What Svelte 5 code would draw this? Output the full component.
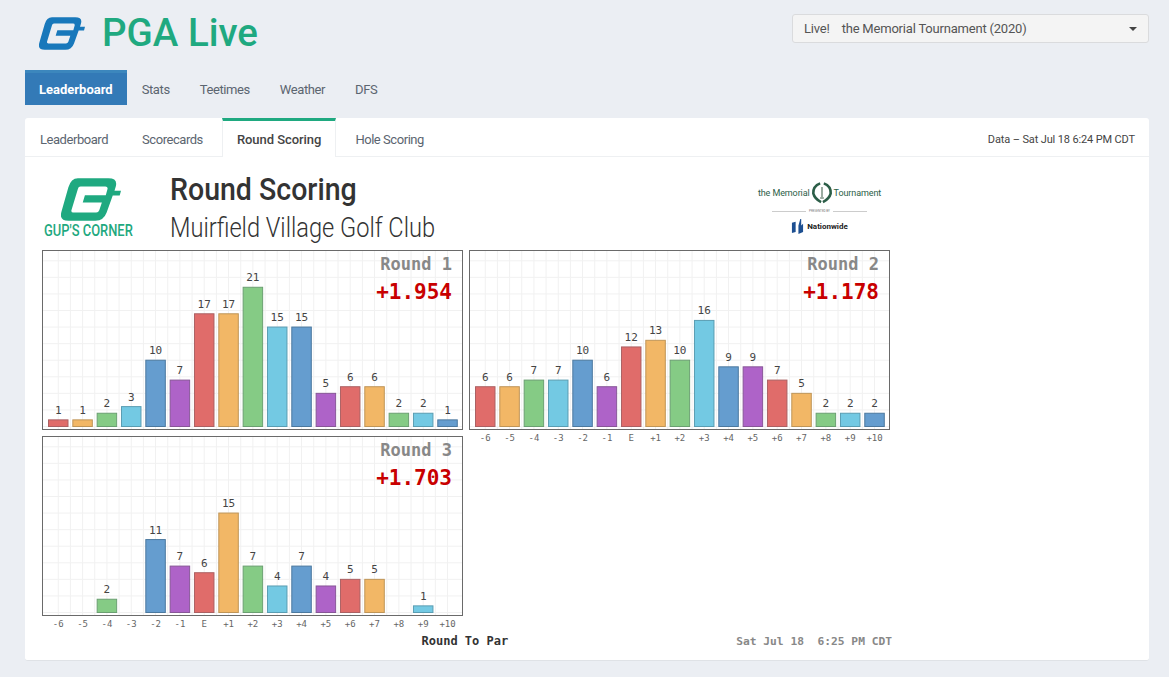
<script lang="ts">
	const navItems = ['Leaderboard', 'Stats', 'Teetimes', 'Weather', 'DFS'];
	const tabs = ['Leaderboard', 'Scorecards', 'Round Scoring', 'Hole Scoring'];
	const palette = ['red', 'orange', 'green', 'cyan', 'blue', 'purple'];
	const pars = ['-6', '-5', '-4', '-3', '-2', '-1', 'E', '+1', '+2', '+3', '+4', '+5', '+6', '+7', '+8', '+9', '+10'];

	const rounds = [
		{ name: 'Round 1', avg: '+1.954', axis: false, counts: [1, 1, 2, 3, 10, 7, 17, 17, 21, 15, 15, 5, 6, 6, 2, 2, 1] },
		{ name: 'Round 2', avg: '+1.178', axis: true, counts: [6, 6, 7, 7, 10, 6, 12, 13, 10, 16, 9, 9, 7, 5, 2, 2, 2] },
		{ name: 'Round 3', avg: '+1.703', axis: true, counts: [0, 0, 2, 0, 11, 7, 6, 15, 7, 4, 7, 4, 5, 5, 0, 1, 0] }
	];

	const W = 421;
	const H = 180;
	const baseY = 176.5;
	const unit = 6.63;
	const pitch = 24.33;
	const barW = 19.5;

	const barX = (i) => 6.5 + pitch * i;
	const vLines = Array.from({ length: 33 }, (_, i) => 16.25 + (pitch / 2) * i);
	const hLines = Array.from({ length: 11 }, (_, i) => baseY - 16.57 * i);
</script>

{#snippet gLogo(cls)}
	<svg class={cls} viewBox="117 45 138 98" aria-hidden="true">
		<path
			fill-rule="evenodd"
			d="M156 45 H226 Q248 45 243 64 L240 74 H255 L252 85 H236 L222 124 Q215 143 196 143 H134 Q112 143 118 122 L134 66 Q140 45 156 45 Z
			M162 64 Q157 64 156 69 L141 119 Q140 124 145 124 H198 Q203 124 205 119 L211 101 H167 L172 84 H220 L224 70 Q225 64 219 64 Z"
		/>
	</svg>
{/snippet}

<div class="page">
	<header class="top">
		<div class="brand">
			{@render gLogo('brand-logo')}
			<h1>PGA Live</h1>
		</div>
		<div class="picker">
			<span class="picker-status">Live!</span>
			<span class="picker-name">the Memorial Tournament (2020)</span>
			<i class="caret"></i>
		</div>
	</header>

	<nav class="main-nav">
		{#each navItems as item, i}
			<a href="#top" class:active={i === 0}>{item}</a>
		{/each}
	</nav>

	<section class="card">
		<div class="tabs">
			{#each tabs as tab, i}
				<a href="#top" class:active={i === 2}>{tab}</a>
			{/each}
			<span class="stamp">Data – Sat Jul 18 6:24 PM CDT</span>
		</div>

		<div class="report">
			<div class="report-head">
				<div class="gups">
					{@render gLogo('gups-logo')}
					<span class="gups-name">GUP'S CORNER</span>
				</div>
				<div class="titles">
					<h2>Round Scoring</h2>
					<h3>Muirfield Village Golf Club</h3>
				</div>
				<div class="sponsor">
					<div class="sponsor-line">
						<span>the Memorial</span>
						<svg viewBox="0 0 24 24" class="crest" aria-hidden="true">
							<path d="M10 2 Q2 5 2.5 13 Q4 19 11 22.5" fill="none" stroke="#2c5e48" stroke-width="2.8" />
							<path d="M14 2 Q22 5 21.5 13 Q20 19 13 22.5" fill="none" stroke="#2c5e48" stroke-width="2.8" />
							<path d="M12 6 V17 M10 18 H14" stroke="#9aaba1" stroke-width="2.2" fill="none" />
						</svg>
						<span>Tournament</span>
					</div>
					<div class="presented"><b></b><span>PRESENTED BY</span><b></b></div>
					<div class="nationwide">
						<svg viewBox="0 0 14 18" class="nw-mark" aria-hidden="true">
							<path d="M1 5 L5 4 V15 L1 16 Z M8 8 L10 1 H11 V8 L13 6 V15 L8 17 Z" fill="#1d4f91" />
						</svg>
						<span>Nationwide</span>
					</div>
				</div>
			</div>

			<div class="charts">
				{#each rounds as round}
					<svg class="chart" width={W} height={H} viewBox="0 0 {W} {H}">
						{#each vLines as x}
							<line class="grid" x1={x} x2={x} y1="0" y2={H} />
						{/each}
						{#each hLines as y}
							<line class="grid" x1="0" x2={W} y1={y} y2={y} />
						{/each}
						<rect class="frame" x="0.5" y="0.5" width={W - 1} height={H - 1} />
						{#each round.counts as n, i}
							{#if n > 0}
								<rect
									class="bar {palette[i % 6]}"
									x={barX(i)}
									y={baseY - n * unit}
									width={barW}
									height={n * unit}
								/>
								<text class="count" x={barX(i) + barW / 2} y={baseY - n * unit - 6}>{n}</text>
							{/if}
						{/each}
						<text class="round-name" x="410" y="20">{round.name}</text>
						<text class="round-avg" x="410" y="49">{round.avg}</text>
						{#if round.axis}
							{#each pars as par, i}
								<text class="par" x={barX(i) + barW / 2} y="190.5">{par}</text>
							{/each}
						{/if}
					</svg>
				{/each}
			</div>

			<div class="chart-foot">
				<span class="axis-title">Round To Par</span>
				<span class="printed">Sat Jul 18&nbsp;&nbsp;6:25 PM CDT</span>
			</div>
		</div>
	</section>
</div>

<style>
	:global(body) {
		background: #ebeef3;
		font-family: Roboto, 'Liberation Sans', sans-serif;
		color: #555;
	}

	.page {
		height: 677px;
		padding: 14px 20px 0 25px;
		box-sizing: border-box;
		overflow: hidden;
	}

	.top {
		display: flex;
		justify-content: space-between;
		align-items: flex-start;
		height: 56px;
	}

	.brand {
		display: flex;
		align-items: center;
		gap: 17px;
		margin: 1px 0 0 14px;
		height: 36px;
	}

	.brand-logo {
		width: 46px;
		height: 33px;
		fill: #1878bb;
	}

	h1 {
		margin: 0;
		font-size: 38.5px;
		font-weight: 500;
		color: #1fa980;
		line-height: 36px;
	}

	.picker {
		width: 357px;
		height: 29px;
		box-sizing: border-box;
		display: flex;
		align-items: center;
		gap: 12px;
		padding: 0 11px;
		background: #f4f4f4;
		border: 1px solid #dadbdd;
		border-radius: 3px;
		font-size: 13px;
		letter-spacing: -0.2px;
	}

	.caret {
		margin-left: auto;
		border: 4px solid transparent;
		border-top-color: #444;
		border-bottom: 0;
	}

	.main-nav {
		display: flex;
		height: 35px;
	}

	.main-nav a {
		padding: 0 15px;
		line-height: 39px;
		font-size: 13px;
		letter-spacing: -0.4px;
		color: #5b6570;
		text-decoration: none;
	}

	.main-nav a.active {
		padding: 0 14px;
		background: #337ab7;
		border-top: 3px solid #3c87bd;
		line-height: 34px;
		letter-spacing: 0;
		color: #fff;
		font-weight: 700;
	}

	.card {
		margin-top: 13px;
		height: 543px;
		background: #fff;
		border-radius: 3px;
		border-bottom: 1px solid #dfe2e6;
		box-sizing: border-box;
	}

	.tabs {
		display: flex;
		align-items: stretch;
		height: 39px;
		border-bottom: 1px solid #eef0f2;
		box-sizing: border-box;
	}

	.tabs a {
		padding: 0 15px;
		margin-right: 4px;
		line-height: 43px;
		font-size: 13px;
		letter-spacing: -0.45px;
		color: #5b6570;
		text-decoration: none;
	}

	.tabs a.active {
		padding: 0 14px;
		border-top: 3px solid #1fa980;
		border-left: 1px solid #eef0f2;
		border-right: 1px solid #eef0f2;
		height: 39px;
		box-sizing: border-box;
		background: #fff;
		color: #444;
		font-weight: 500;
		letter-spacing: -0.05px;
		line-height: 37px;
	}

	.stamp {
		margin-left: auto;
		padding-right: 14px;
		font-size: 11px;
		letter-spacing: -0.13px;
		line-height: 43px;
		color: #444;
	}

	.report {
		width: 851px;
		padding-left: 17px;
	}

	.report-head {
		display: flex;
		height: 93px;
	}

	.gups {
		width: 128px;
		display: flex;
		flex-direction: column;
		align-items: flex-start;
		padding-top: 21px;
		box-sizing: border-box;
	}

	.gups-logo {
		width: 60px;
		height: 43px;
		margin-left: 19px;
		fill: #1fa980;
	}

	.gups-name {
		margin: 2px 0 0 2px;
		font-size: 17px;
		line-height: 14px;
		font-weight: 500;
		color: #1fa980;
		white-space: nowrap;
		transform: scaleX(0.76);
		transform-origin: left center;
	}

	.titles {
		flex: 1;
		padding-top: 14px;
		color: #333;
	}

	h2,
	h3 {
		margin: 0;
		line-height: 38px;
		white-space: nowrap;
		transform-origin: left center;
	}

	h2 {
		font-size: 31px;
		font-weight: 500;
		transform: scaleX(0.92);
	}

	h3 {
		font-size: 27px;
		font-weight: 300;
		transform: scaleX(0.875);
	}

	.sponsor {
		width: 135px;
		margin-right: 6px;
		padding-top: 24px;
		display: flex;
		flex-direction: column;
		align-items: center;
		color: #2c5e48;
	}

	.sponsor-line {
		display: flex;
		align-items: center;
		gap: 1px;
		font-size: 9px;
		letter-spacing: -0.1px;
		white-space: nowrap;
	}

	.crest {
		width: 22px;
		height: 23px;
	}

	.presented {
		display: flex;
		align-items: center;
		gap: 3px;
		margin-top: 5px;
		font-size: 3px;
		color: #777;
	}

	.presented b {
		width: 34px;
		height: 1px;
		background: #ccc;
	}

	.nationwide {
		display: flex;
		align-items: center;
		gap: 3px;
		margin-top: 5px;
		font-size: 8px;
		font-weight: 700;
		color: #222;
	}

	.nw-mark {
		width: 13px;
		height: 17px;
	}

	.charts {
		display: grid;
		grid-template-columns: 421px 422px;
		grid-auto-rows: 180px;
		gap: 6px;
	}

	.chart {
		display: block;
		overflow: visible;
	}

	.grid {
		stroke: #f1f1f1;
		stroke-width: 1;
	}

	.frame {
		fill: none;
		stroke: #6a6a6a;
	}

	.bar {
		stroke-width: 1;
	}

	.red { fill: #e06c6a; stroke: #ab6163; }
	.orange { fill: #f2b766; stroke: #bf9558; }
	.green { fill: #85cb85; stroke: #6b9f72; }
	.cyan { fill: #73c9e3; stroke: #5a9db2; }
	.blue { fill: #659dcf; stroke: #4c799f; }
	.purple { fill: #ae63c8; stroke: #875797; }

	text {
		font-family: 'DejaVu Sans Mono', monospace;
	}

	.count {
		font-size: 11px;
		fill: #444;
		text-anchor: middle;
	}

	.par {
		font-size: 9px;
		fill: #666;
		text-anchor: middle;
	}

	.round-name {
		font-size: 17px;
		font-weight: 700;
		fill: #888;
		text-anchor: end;
	}

	.round-avg {
		font-size: 21px;
		font-weight: 700;
		fill: #c80000;
		text-anchor: end;
	}

	.chart-foot {
		display: flex;
		justify-content: flex-end;
		align-items: baseline;
		margin-top: 18px;
		font-family: 'DejaVu Sans Mono', monospace;
	}

	.axis-title {
		font-size: 12px;
		font-weight: 700;
		color: #333;
		margin-right: 228px;
	}

	.printed {
		font-size: 11.25px;
		font-weight: 700;
		color: #888;
		margin-right: 1px;
	}
</style>
